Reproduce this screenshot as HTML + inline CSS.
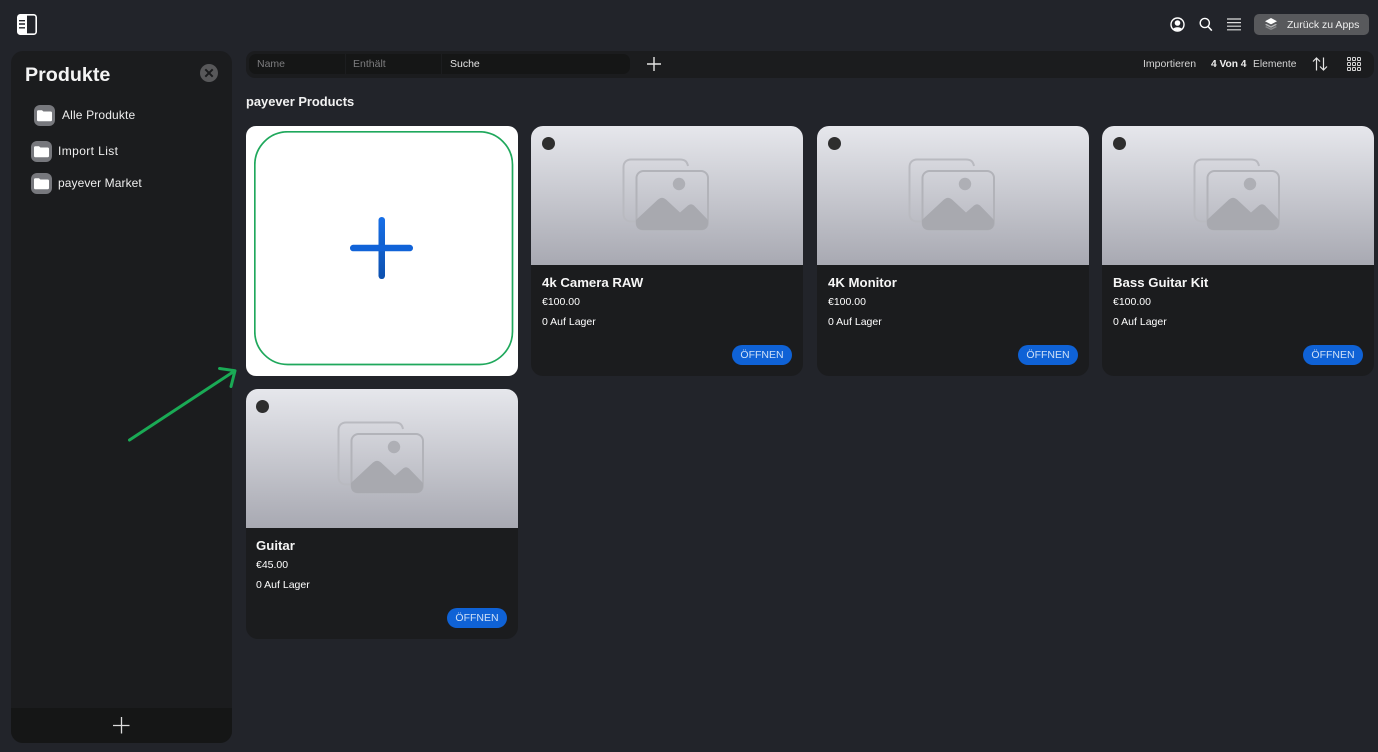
<!DOCTYPE html>
<html><head><meta charset="utf-8"><style>
*{box-sizing:border-box;margin:0;padding:0}
html,body{width:1378px;height:752px;overflow:hidden;background:#22242a;font-family:"Liberation Sans",sans-serif;color:#fff}
.a{position:absolute;white-space:nowrap}
.card{position:absolute;width:272px;height:250px;border-radius:12px;background:#1b1c1e;overflow:hidden}
.img{position:absolute;left:0;top:0;width:100%;height:139px;background:linear-gradient(#e6e7ec,#a8a9b2)}
.dot{position:absolute;left:11px;top:11px;width:13px;height:13px;border-radius:50%;background:#2e2e2e}
.img svg{position:absolute;left:91px;top:32px}
.t{position:absolute;left:11px;top:148px;font-size:13.2px;font-weight:bold;line-height:17px;color:#f6f6f6}
.p{position:absolute;left:11px;top:170px;font-size:10.5px;line-height:13px}
.s{position:absolute;left:11px;top:190px;font-size:10.5px;line-height:13px}
.b{position:absolute;left:201px;top:219px;width:60px;height:20px;border-radius:10px;background:#0f62d6;color:#cfe0f7;font-size:10.5px;line-height:20px;text-align:center}
.fi{position:absolute;width:21px;height:21px;border-radius:6px;background:#77787d}
.fi svg{position:absolute;left:3px;top:3px}
</style></head><body>

<svg class="a" style="left:17px;top:14px" width="20" height="21" viewBox="0 0 20 21"><rect x="0.8" y="0.8" width="18.4" height="19.4" rx="2.5" fill="none" stroke="#fff" stroke-width="1.6"/><path d="M2 1h8v19H2a1 1 0 0 1-1-1V2a1 1 0 0 1 1-1z" fill="#fff"/><path d="M2 6.700h6M2 10h6M2 13.800h6" stroke="#22242a" stroke-width="1.400"/></svg>

<svg class="a" style="left:1170px;top:17px" width="15" height="15" viewBox="0 0 15 15"><circle cx="7.5" cy="7.5" r="6.5" fill="none" stroke="#fff" stroke-width="1.4"/><circle cx="7.5" cy="6" r="2.8" fill="#fff"/><path d="M3 12c1-2.4 8-2.4 9 0-2 2-7 2-9 0z" fill="#fff"/></svg>
<svg class="a" style="left:1199px;top:17px" width="14" height="15" viewBox="0 0 14 15"><circle cx="5.8" cy="6" r="4.6" fill="none" stroke="#fff" stroke-width="1.4"/><path d="M9.2 9.6l3.6 4" stroke="#fff" stroke-width="1.6"/></svg>
<svg class="a" style="left:1227px;top:18px" width="14" height="13" viewBox="0 0 14 13"><path d="M0 1h14M0 4.6h14M0 8.2h14M0 11.8h14" stroke="#ddd" stroke-width="1.2"/></svg>

<div class="a" style="left:1254px;top:14px;width:115px;height:21px;border-radius:5px;background:#58595c"></div>
<svg class="a" style="left:1264px;top:17px" width="14" height="15" viewBox="0 0 14 15"><path d="M1 10l6 3 6-3-1.500-.8L7 11.500 2.500 9.200z" fill="#8b8c8e"/><path d="M1 7.700l6 3 6-3-1.500-.8L7 9.200 2.500 6.900z" fill="#b5b6b7"/><path d="M7 1l6 3.200L7 7.400 1 4.200z" fill="#fff"/></svg>
<div class="a" style="left:1287px;top:19px;font-size:10.500px;line-height:13px;color:#eee">Zurück zu Apps</div>

<!-- Sidebar -->
<div class="a" style="left:11px;top:51px;width:221px;height:692px;border-radius:12px;background:#1b1c1e;overflow:hidden">
  <div class="a" style="left:0;top:657px;width:221px;height:35px;background:#151616"></div>
</div>
<div class="a" style="left:25px;top:62px;font-size:19.700px;line-height:26px;font-weight:bold;color:#f4f4f4">Produkte</div>
<svg class="a" style="left:200px;top:64px" width="18" height="18" viewBox="0 0 18 18"><circle cx="9" cy="9" r="9" fill="#58585a"/><path d="M5.300 5.300l7.400 7.400M12.700 5.300l-7.400 7.400" stroke="#1b1c1e" stroke-width="2"/></svg>

<div class="fi" style="left:34px;top:105px"><svg width="15" height="15" viewBox="0 0 15 15"><path d="M0 4.500V3.500C0 2.800.5 2.300 1.200 2.300H5l1.400 1.200h7.400c.7 0 1.200.5 1.200 1.200V12c0 .7-.5 1.200-1.200 1.200H1.200C.5 13.200 0 12.700 0 12z" fill="#fff"/></svg></div>
<div class="a" style="left:62px;top:108px;font-size:12px;line-height:14px;color:#eee;letter-spacing:.15px">Alle Produkte</div>
<div class="fi" style="left:31px;top:141px"><svg width="15" height="15" viewBox="0 0 15 15"><path d="M0 4.500V3.500C0 2.800.5 2.300 1.200 2.300H5l1.400 1.200h7.400c.7 0 1.200.5 1.200 1.200V12c0 .7-.5 1.200-1.200 1.200H1.200C.5 13.200 0 12.700 0 12z" fill="#fff"/></svg></div>
<div class="a" style="left:58px;top:144px;font-size:12px;line-height:14px;color:#eee;letter-spacing:.4px">Import List</div>
<div class="fi" style="left:31px;top:173px"><svg width="15" height="15" viewBox="0 0 15 15"><path d="M0 4.500V3.500C0 2.800.5 2.300 1.200 2.300H5l1.400 1.200h7.400c.7 0 1.200.5 1.200 1.200V12c0 .7-.5 1.200-1.200 1.200H1.200C.5 13.200 0 12.700 0 12z" fill="#fff"/></svg></div>
<div class="a" style="left:58px;top:176px;font-size:12px;line-height:14px;color:#eee;letter-spacing:.08px">payever Market</div>
<svg class="a" style="left:113px;top:717px" width="17" height="17" viewBox="0 0 17 17"><path d="M0 8.500h16.500M8.500 0v16.500" stroke="#ddd" stroke-width="1.300"/></svg>

<!-- Toolbar -->
<div class="a" style="left:246px;top:51px;width:1128px;height:27px;border-radius:9px;background:#1b1c1e"></div>
<div class="a" style="left:249px;top:54px;width:381px;height:20px;border-radius:7px;background:#151616"></div>
<div class="a" style="left:345px;top:54px;width:1px;height:20px;background:#1c1d1f"></div>
<div class="a" style="left:441px;top:54px;width:1px;height:20px;background:#1c1d1f"></div>
<div class="a" style="left:257px;top:58px;font-size:10.500px;line-height:13px;color:#7d7d7f">Name</div>
<div class="a" style="left:353px;top:58px;font-size:10.500px;line-height:13px;color:#7d7d7f">Enthält</div>
<div class="a" style="left:450px;top:58px;font-size:10.500px;line-height:13px;color:#e4e4e4">Suche</div>
<svg class="a" style="left:647px;top:57px" width="14" height="14" viewBox="0 0 14 14"><path d="M0 7h14M7 0v14" stroke="#e4e4e4" stroke-width="1.400"/></svg>
<div class="a" style="left:1143px;top:58px;font-size:10.500px;line-height:13px;color:#d5d5d5">Importieren</div>
<div class="a" style="left:1211px;top:58px;font-size:10.200px;line-height:13px;font-weight:bold;color:#eee">4 Von 4</div>
<div class="a" style="left:1253px;top:58px;font-size:10.300px;line-height:13px;color:#d5d5d5">Elemente</div>
<svg class="a" style="left:1312px;top:57px" width="16" height="14" viewBox="0 0 16 14"><path d="M4.500 13.500V1M1 4.500L4.500 1 8 4.500M11.500.5V13M8 9.500L11.500 13 15 9.500" fill="none" stroke="#e4e4e4" stroke-width="1.200"/></svg>
<svg class="a" style="left:1347px;top:57px" width="14" height="14" viewBox="0 0 14 14" fill="none" stroke="#d5d5d5" stroke-width="1"><rect x=".5" y=".5" width="3" height="3" rx=".8"/><rect x="5.500" y=".5" width="3" height="3" rx=".8"/><rect x="10.500" y=".5" width="3" height="3" rx=".8"/><rect x=".5" y="5.500" width="3" height="3" rx=".8"/><rect x="5.500" y="5.500" width="3" height="3" rx=".8"/><rect x="10.500" y="5.500" width="3" height="3" rx=".8"/><rect x=".5" y="10.500" width="3" height="3" rx=".8"/><rect x="5.500" y="10.500" width="3" height="3" rx=".8"/><rect x="10.500" y="10.500" width="3" height="3" rx=".8"/></svg>

<div class="a" style="left:246px;top:94px;font-size:12.900px;line-height:16px;font-weight:bold;color:#f2f2f2">payever Products</div>

<!-- Add card -->
<div class="a" style="left:246px;top:126px;width:271.500px;height:250px;border-radius:10px;background:#fff"></div>
<svg class="a" style="left:254px;top:131px" width="260" height="235" viewBox="0 0 260 235"><rect x="0.800" y="0.800" width="257.700" height="232.700" rx="33" fill="none" stroke="#1fa85c" stroke-width="1.700"/></svg>
<svg class="a" style="left:350px;top:217px" width="63" height="62" viewBox="0 0 63 62"><defs><linearGradient id="g" x1="0" y1="0" x2="0" y2="1"><stop offset="0" stop-color="#176fe8"/><stop offset="1" stop-color="#0d50ae"/></linearGradient></defs><rect x="28.500" y="0" width="6.500" height="62" rx="3.200" fill="url(#g)"/><rect x="0" y="27.800" width="63" height="6.500" rx="3.200" fill="#1163d8"/></svg>

<!-- Arrow -->
<svg class="a" style="left:125px;top:362px" width="115" height="82" viewBox="0 0 115 82"><path d="M4.500 78L109.500 9M94.500 6.500L110 8.700 106 24.500" fill="none" stroke="#1aaa55" stroke-width="3" stroke-linecap="round" stroke-linejoin="round"/></svg>

<!-- Cards -->
<div class="card" style="left:531px;top:126px"><div class="img"><div class="dot"></div><svg width="88" height="74" viewBox="0 0 88 74"><path d="M66 8C65 3.500 63 1.500 58 1.500H9C4.500 1.500 1.500 4.500 1.500 9v47c0 4.500 3 7.500 7.500 7.500h5" fill="none" stroke="#b9bac0" stroke-width="2"/><rect x="14.500" y="13" width="71.500" height="58.500" rx="7" fill="none" stroke="#b2b3b9" stroke-width="2"/><circle cx="57" cy="26" r="6.200" fill="#aeafb5"/><path d="M14 62L36 41.500q4-3.500 8 0l14 13 8-7q3-2.500 6 0l14 14.500v3q0 7-7 7H21q-7 0-7-7z" fill="#a8a9af"/></svg></div><div class="t">4k Camera RAW</div><div class="p">€100.00</div><div class="s">0 Auf Lager</div><div class="b">ÖFFNEN</div></div>

<div class="card" style="left:817px;top:126px;width:271.500px"><div class="img"><div class="dot"></div><svg width="88" height="74" viewBox="0 0 88 74"><path d="M66 8C65 3.500 63 1.500 58 1.500H9C4.500 1.500 1.500 4.500 1.500 9v47c0 4.500 3 7.500 7.500 7.500h5" fill="none" stroke="#b9bac0" stroke-width="2"/><rect x="14.500" y="13" width="71.500" height="58.500" rx="7" fill="none" stroke="#b2b3b9" stroke-width="2"/><circle cx="57" cy="26" r="6.200" fill="#aeafb5"/><path d="M14 62L36 41.500q4-3.500 8 0l14 13 8-7q3-2.500 6 0l14 14.500v3q0 7-7 7H21q-7 0-7-7z" fill="#a8a9af"/></svg></div><div class="t">4K Monitor</div><div class="p">€100.00</div><div class="s">0 Auf Lager</div><div class="b">ÖFFNEN</div></div>

<div class="card" style="left:1102px;top:126px"><div class="img"><div class="dot"></div><svg width="88" height="74" viewBox="0 0 88 74"><path d="M66 8C65 3.500 63 1.500 58 1.500H9C4.500 1.500 1.500 4.500 1.500 9v47c0 4.500 3 7.500 7.500 7.500h5" fill="none" stroke="#b9bac0" stroke-width="2"/><rect x="14.500" y="13" width="71.500" height="58.500" rx="7" fill="none" stroke="#b2b3b9" stroke-width="2"/><circle cx="57" cy="26" r="6.200" fill="#aeafb5"/><path d="M14 62L36 41.500q4-3.500 8 0l14 13 8-7q3-2.500 6 0l14 14.500v3q0 7-7 7H21q-7 0-7-7z" fill="#a8a9af"/></svg></div><div class="t">Bass Guitar Kit</div><div class="p">€100.00</div><div class="s">0 Auf Lager</div><div class="b">ÖFFNEN</div></div>

<div class="card" style="left:246px;top:389px;width:271.500px"><div class="img"><div class="dot" style="left:10px"></div><svg style="left:91px" width="88" height="74" viewBox="0 0 88 74"><path d="M66 8C65 3.500 63 1.500 58 1.500H9C4.500 1.500 1.500 4.500 1.500 9v47c0 4.500 3 7.500 7.500 7.500h5" fill="none" stroke="#b9bac0" stroke-width="2"/><rect x="14.500" y="13" width="71.500" height="58.500" rx="7" fill="none" stroke="#b2b3b9" stroke-width="2"/><circle cx="57" cy="26" r="6.200" fill="#aeafb5"/><path d="M14 62L36 41.500q4-3.500 8 0l14 13 8-7q3-2.500 6 0l14 14.500v3q0 7-7 7H21q-7 0-7-7z" fill="#a8a9af"/></svg></div><div class="t" style="left:10px">Guitar</div><div class="p" style="left:10px">€45.00</div><div class="s" style="left:10px">0 Auf Lager</div><div class="b">ÖFFNEN</div></div>

</body></html>
